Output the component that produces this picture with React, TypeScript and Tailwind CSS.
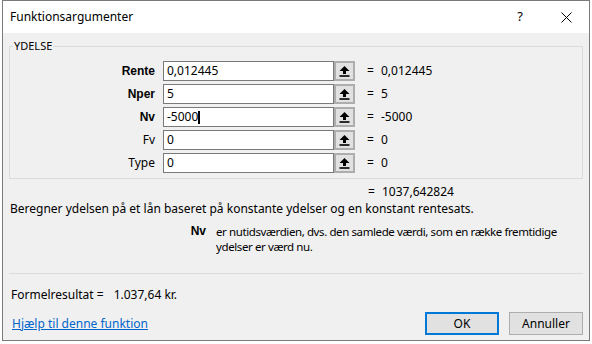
import React from "react";

const UpArrow = () => (
  <svg width="11" height="11" viewBox="0 0 11 11">
    <path d="M5.5 0 L10.5 5 L7 5 L7 8 L4 8 L4 5 L0.5 5 Z" fill="#000" />
    <rect x="0.5" y="9.2" width="10" height="1.6" fill="#000" />
  </svg>
);

const rows = [
  { label: "Rente", bold: true, value: "0,012445", result: "0,012445" },
  { label: "Nper", bold: true, value: "5", result: "5" },
  { label: "Nv", bold: true, value: "-5000", result: "-5000", caret: true },
  { label: "Fv", bold: false, value: "0", result: "0" },
  { label: "Type", bold: false, value: "0", result: "0" },
];

export default function App() {
  return (
    <div
      className="w-[592px] h-[344px] bg-white flex pl-[2px] overflow-hidden"
      style={{ fontFamily: '"Noto Sans", "Liberation Sans", sans-serif' }}
    >
      <div className="w-[588px] h-[341px] border border-[#7a7a7a] bg-[#f0f0f0] flex flex-col text-[12px] text-black overflow-hidden">
        {/* Title bar */}
        <div className="h-[32px] bg-white flex items-center shrink-0">
          <div className="pl-[7px] flex-1 text-[12px] leading-none">Funktionsargumenter</div>
          <div className="w-[46px] flex justify-center text-[13px]">?</div>
          <div className="w-[46px] flex justify-center">
            <svg width="11" height="11" viewBox="0 0 11 11">
              <path d="M0.5 0.5 L10.5 10.5 M10.5 0.5 L0.5 10.5" stroke="#000" strokeWidth="1" />
            </svg>
          </div>
        </div>
        {/* Body */}
        <div className="flex flex-col pl-[6px] pr-[6px]">
          <fieldset className="mt-[6px] border border-[#dcdcdc] pl-0 pr-0 pt-[8px] pb-[5px] flex flex-col gap-[3px]">
            <legend className="ml-[3px] px-[1px] text-[11px] leading-[14px]">YDELSE</legend>
            {rows.map((r) => (
              <div key={r.label} className="flex items-center h-[20px]">
                <div
                  className={
                    "w-[145px] shrink-0 text-right " +
                    (r.bold ? "font-bold text-[12px]" : "text-[12px]")
                  }
                  style={r.bold ? { fontFamily: '"Liberation Sans", sans-serif' } : undefined}
                >
                  {r.label}
                </div>
                <div className="ml-[8px] w-[171px] h-[20px] bg-white border border-[#7a7a7a] flex items-center pl-[3px] text-[12px]">
                  {r.value}
                  {r.caret && <span className="inline-block w-[2px] h-[13px] bg-black" />}
                </div>
                <div className="w-[21px] h-[20px] border-2 border-[#adadad] bg-[#e1e1e1] flex items-center justify-center">
                  <UpArrow />
                </div>
                <div className="ml-[12px] w-[14px]">=</div>
                <div>{r.result}</div>
              </div>
            ))}
          </fieldset>
          <div className="mt-[3px] h-[20px] flex items-center">
            <div className="ml-[359px] w-[14px]">=</div>
            <div>1037,642824</div>
          </div>
          <div className="-mt-[1px] h-[15px] flex items-center pl-[1px] whitespace-nowrap">
            Beregner ydelsen på et lån baseret på konstante ydelser og en konstant rentesats.
          </div>
          <div className="flex mt-[8px]">
            <div
              className="w-[197px] shrink-0 text-right font-bold leading-[15px]"
              style={{ fontFamily: '"Liberation Sans", sans-serif' }}
            >
              Nv
            </div>
            <div className="ml-[10px] shrink-0 whitespace-nowrap text-[11.5px] tracking-[-0.4px] flex flex-col">
              <div className="h-[15px] leading-[15px]">
                er nutidsværdien, dvs. den samlede værdi, som en række fremtidige
              </div>
              <div className="h-[15px] leading-[15px]">ydelser er værd nu.</div>
            </div>
          </div>
          <div className="mt-[19px] h-px bg-[#dcdcdc]" />
          <div className="mt-[13px] h-[15px] flex items-center pl-[2px]">
            <span>Formelresultat =</span>
            <span className="ml-[10px]">1.037,64 kr.</span>
          </div>
          <div className="mt-[10px] flex items-center">
            <a className="pl-[3px] text-[#0066cc] underline flex-1" href="#">
              Hjælp til denne funktion
            </a>
            <button className="w-[74px] h-[23px] border-2 border-[#0078d7] bg-[#e1e1e1] text-[12px]">
              OK
            </button>
            <button className="ml-[10px] w-[74px] h-[23px] border border-[#adadad] bg-[#e1e1e1] text-[12px]">
              Annuller
            </button>
          </div>
        </div>
      </div>
    </div>
  );
}
